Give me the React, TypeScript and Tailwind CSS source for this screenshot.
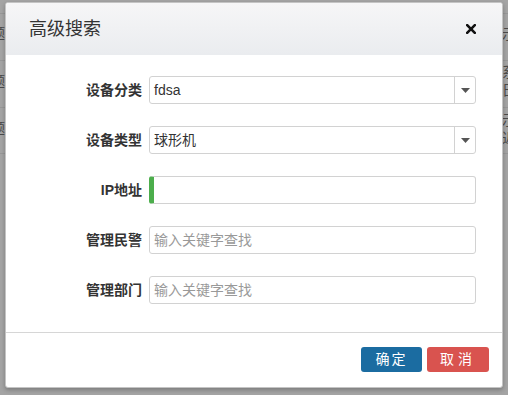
import React from "react";

const font = { fontFamily: '"Liberation Sans", "Noto Sans CJK SC", sans-serif' };

function Caret() {
  return (
    <svg width="9" height="5" viewBox="0 0 9 5" className="block">
      <path d="M0 0 H9 L4.5 5 Z" fill="#555" />
    </svg>
  );
}

function SelectBox({ value }: { value: string }) {
  return (
    <div className="flex h-[28px] w-[327px] items-stretch rounded-[3px] border border-[#d2d2d2] bg-white">
      <div className="flex flex-1 items-center pl-[4px] text-[14px] text-[#333]">{value}</div>
      <div className="flex w-[21px] items-center justify-center border-l border-[#d2d2d2]">
        <Caret />
      </div>
    </div>
  );
}

function TextBox({ placeholder, accent }: { placeholder?: string; accent?: boolean }) {
  return (
    <div
      className={
        "flex h-[28px] w-[327px] items-center rounded-[3px] border bg-white text-[14px] " +
        (accent ? "border-[#d2d2d2] border-l-[5px] border-l-[#4cae4c] pl-[4px]" : "border-[#d2d2d2] pl-[4px]")
      }
    >
      <span className="text-[#999]">{placeholder ?? ""}</span>
    </div>
  );
}

function Row({ label, children }: { label: string; children: React.ReactNode }) {
  return (
    <div className="flex items-center">
      <div className="w-[136px] text-right text-[14px] font-bold text-[#333]">{label}</div>
      <div className="ml-[7px]">{children}</div>
    </div>
  );
}

export default function App() {
  return (
    <div className="relative h-[395px] w-[508px] overflow-hidden bg-[#a4a4a4]" style={font}>
      {/* background table peeking behind the overlay */}
      <div className="absolute left-0 top-[13px] h-px w-full bg-[#979797]" />
      <div className="absolute left-0 top-[60px] h-px w-full bg-[#979797]" />
      <div className="absolute left-0 top-[107px] h-px w-full bg-[#979797]" />
      <div className="absolute left-0 top-[153px] h-px w-full bg-[#979797]" />
      <div className="absolute left-[-9px] top-[25px] text-[14px] leading-[16px] text-[#4a4a4a]">题</div>
      <div className="absolute left-[-9px] top-[73px] text-[14px] leading-[16px] text-[#4a4a4a]">题</div>
      <div className="absolute left-[-9px] top-[120px] text-[14px] leading-[16px] text-[#4a4a4a]">题</div>
      <div className="absolute left-[502px] top-[26px] text-[14px] leading-[16px] text-[#4a4a4a]">示</div>
      <div className="absolute left-[502px] top-[64px] text-[14px] leading-[16px] text-[#4a4a4a]">系</div>
      <div className="absolute left-[502px] top-[82px] text-[14px] leading-[16px] text-[#4a4a4a]">日</div>
      <div className="absolute left-[502px] top-[112px] text-[14px] leading-[16px] text-[#4a4a4a]">示</div>
      <div className="absolute left-[502px] top-[130px] text-[14px] leading-[16px] text-[#4a4a4a]">近</div>

      {/* modal */}
      <div className="absolute left-[5px] top-[2px] flex h-[386px] w-[498px] flex-col overflow-hidden rounded-[3px] border border-[#c4c4c4] bg-white shadow-[0_2px_4px_rgba(0,0,0,0.25)]">
        <div className="flex h-[52px] shrink-0 items-center justify-between bg-gradient-to-b from-[#f6f6f7] to-[#eaecef] pl-[23px] pr-[26px]">
          <span className="text-[18px] text-[#333]">高级搜索</span>
          <svg width="10" height="10" viewBox="0 0 10 10" className="block">
            <path d="M1.2 1.2 L8.8 8.8 M8.8 1.2 L1.2 8.8" stroke="#111" strokeWidth="2.6" strokeLinecap="square" />
          </svg>
        </div>
        <div className="flex flex-col gap-[22px] pb-[28px] pt-[21px]">
          <Row label="设备分类">
            <SelectBox value="fdsa" />
          </Row>
          <Row label="设备类型">
            <SelectBox value="球形机" />
          </Row>
          <Row label="IP地址">
            <TextBox accent />
          </Row>
          <Row label="管理民警">
            <TextBox placeholder="输入关键字查找" />
          </Row>
          <Row label="管理部门">
            <TextBox placeholder="输入关键字查找" />
          </Row>
        </div>
        <div className="flex flex-1 items-start justify-end gap-[5px] border-t border-[#d6d6d6] pr-[13px] pt-[14px]">
          <button className="h-[25px] w-[61px] rounded-[3px] bg-[#1b6ca1] text-[14px] tracking-[2px] text-white">确定</button>
          <button className="h-[25px] w-[62px] rounded-[3px] bg-[#d9534f] text-[14px] tracking-[4px] text-white">取消</button>
        </div>
      </div>
    </div>
  );
}
